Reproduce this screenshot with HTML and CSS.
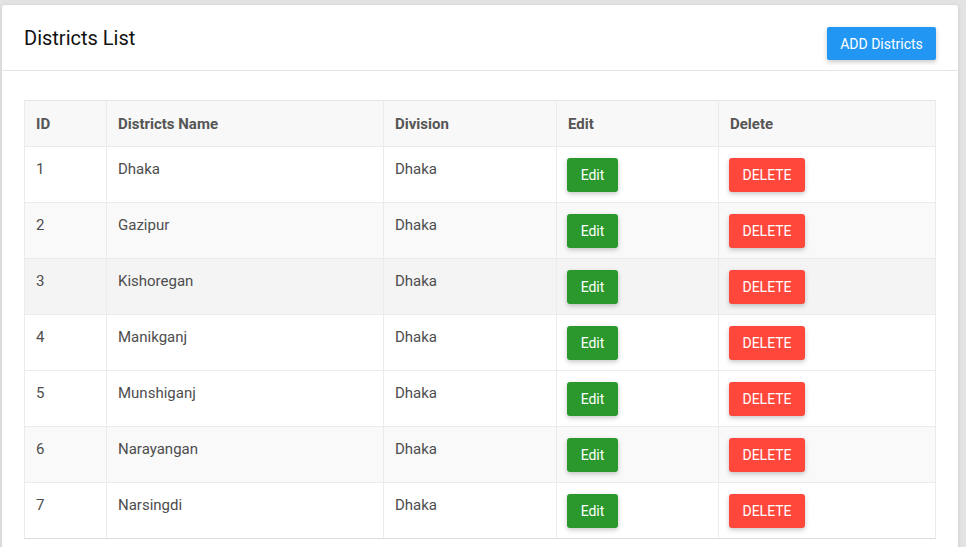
FILE: index.html
```html
<!DOCTYPE html>
<html>
<head>
<meta charset="utf-8">
<link rel="stylesheet" href="styles.css">
</head>
<body>
<div class="card">
  <div class="card-header">
    <h2 class="title">Districts List</h2>
    <button class="btn btn-blue">ADD Districts</button>
  </div>
  <div class="card-body">
    <table class="table">
      <colgroup>
        <col class="c1"><col class="c2"><col class="c3"><col class="c4"><col class="c5">
      </colgroup>
      <thead>
        <tr><th>ID</th><th>Districts Name</th><th>Division</th><th>Edit</th><th>Delete</th></tr>
      </thead>
      <tbody>
        <tr><td>1</td><td>Dhaka</td><td>Dhaka</td><td><button class="btn btn-green">Edit</button></td><td><button class="btn btn-red">DELETE</button></td></tr>
        <tr class="striped"><td>2</td><td>Gazipur</td><td>Dhaka</td><td><button class="btn btn-green">Edit</button></td><td><button class="btn btn-red">DELETE</button></td></tr>
        <tr class="hover"><td>3</td><td>Kishoregan</td><td>Dhaka</td><td><button class="btn btn-green">Edit</button></td><td><button class="btn btn-red">DELETE</button></td></tr>
        <tr><td>4</td><td>Manikganj</td><td>Dhaka</td><td><button class="btn btn-green">Edit</button></td><td><button class="btn btn-red">DELETE</button></td></tr>
        <tr><td>5</td><td>Munshiganj</td><td>Dhaka</td><td><button class="btn btn-green">Edit</button></td><td><button class="btn btn-red">DELETE</button></td></tr>
        <tr class="striped"><td>6</td><td>Narayangan</td><td>Dhaka</td><td><button class="btn btn-green">Edit</button></td><td><button class="btn btn-red">DELETE</button></td></tr>
        <tr><td>7</td><td>Narsingdi</td><td>Dhaka</td><td><button class="btn btn-green">Edit</button></td><td><button class="btn btn-red">DELETE</button></td></tr>
      </tbody>
    </table>
  </div>
</div>
</body>
</html>
```
FILE: styles.css
```css
html, body {
  margin: 0;
  padding: 0;
  background: #e3e3e3;
  font-family: Roboto, "Liberation Sans", sans-serif;
  overflow: hidden;
}
.card {
  margin: 5px 0 0 2px;
  width: 956px;
  background: #fff;
  border-radius: 3px;
  box-shadow: 0 1px 4px rgba(0,0,0,0.12);
  min-height: 600px;
}
.card-header {
  display: flex;
  justify-content: space-between;
  align-items: flex-start;
  padding: 21px 22px 10px 22px;
  border-bottom: 1px solid #e6e6e6;
}
.title {
  margin: 0;
  font-size: 20px;
  font-weight: 400;
  line-height: 24px;
  color: #111;
}
.btn {
  border: none;
  font-family: Roboto, "Liberation Sans", sans-serif;
  font-size: 14px;
  color: #fff;
  border-radius: 3px;
  box-shadow: 0 2px 5px rgba(0,0,0,0.22);
  padding: 0;
  cursor: pointer;
}
.btn-blue {
  margin-top: 1px;
  height: 33px;
  width: 109px;
  background: #2196f3;
  border-radius: 2px;
}
.btn-green {
  display: block;
  height: 34px;
  width: 51px;
  margin: -1px 0 0 -1px;
  background: #2a982c;
}
.btn-red {
  display: block;
  height: 34px;
  width: 76px;
  margin: -1px 0 0 -1px;
  background: #ff483b;
}
.card-body {
  padding: 29px 22px 0 22px;
}
.table {
  border-collapse: collapse;
  width: 911px;
  table-layout: fixed;
  border: 1px solid #ddd;
  border-top: 1px solid #e4e4e4;
  font-size: 15px;
  color: #4d4d4d;
}
.c1 { width: 82px; }
.c2 { width: 277px; }
.c3 { width: 173px; }
.c4 { width: 162px; }
.c5 { width: 217px; }
.table th {
  background: #f8f8f8;
  text-align: left;
  font-weight: 700;
  color: #555;
  height: 45px;
  padding: 0 11px;
  vertical-align: middle;
  border: 1px solid #ebebeb;
  border-top: none;
}
.table td {
  padding: 12px 10px 10px 11px;
  line-height: 20px;
  vertical-align: top;
  border: 1px solid #ebebeb;
}
.table tbody tr:last-child td {
  border-bottom: 1px solid #ddd;
}
.table tr.striped td { background: #f9f9f9; }
.table tr.hover td { background: #f4f4f4; }
```
